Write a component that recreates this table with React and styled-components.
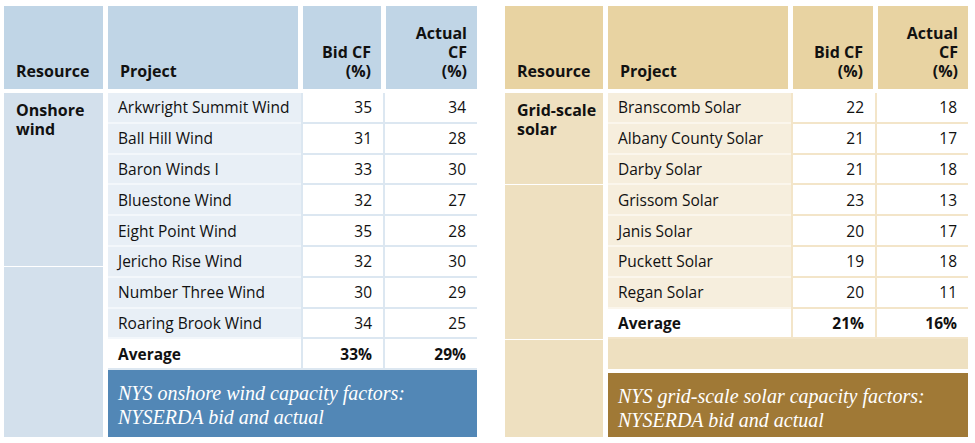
import styled, { createGlobalStyle } from "styled-components";

const GlobalStyle = createGlobalStyle`
  html, body {
    margin: 0;
    padding: 0;
    background: #ffffff;
  }
  body {
    font-family: "Open Sans", "Noto Sans", sans-serif;
    color: #111111;
  }
`;

const blue = {
  head: "#c0d5e6",
  side: "#d3e0ec",
  project: "#e8eff6",
  line: "#dce7f1",
  soft: "#f3f7fb",
  caption: "#5287b6",
  filler: "#d3e0ec",
};

const tan = {
  head: "#e8d3a2",
  side: "#eee0c0",
  project: "#f6eedd",
  line: "#f3e5c9",
  soft: "#fbf6ec",
  caption: "#a07936",
  filler: "#eee0c0",
};

const windData = {
  theme: blue,
  resource: ["Onshore", "wind"],
  segments: [154, 192],
  cols: { side: 99, project: 190, bid: 78, actual: 91 },
  rows: [
    ["Arkwright Summit Wind", 35, 34],
    ["Ball Hill Wind", 31, 28],
    ["Baron Winds I", 33, 30],
    ["Bluestone Wind", 32, 27],
    ["Eight Point Wind", 35, 28],
    ["Jericho Rise Wind", 32, 30],
    ["Number Three Wind", 30, 29],
    ["Roaring Brook Wind", 34, 25],
  ],
  average: ["33%", "29%"],
  filler: false,
  caption: ["NYS onshore wind capacity factors:", "NYSERDA bid and actual"],
};

const solarData = {
  theme: tan,
  resource: ["Grid-scale", "solar"],
  segments: [91, 154, 99],
  cols: { side: 98, project: 180, bid: 80, actual: 90 },
  rows: [
    ["Branscomb Solar", 22, 18],
    ["Albany County Solar", 21, 17],
    ["Darby Solar", 21, 18],
    ["Grissom Solar", 23, 13],
    ["Janis Solar", 20, 17],
    ["Puckett Solar", 19, 18],
    ["Regan Solar", 20, 11],
  ],
  average: ["21%", "16%"],
  filler: true,
  caption: ["NYS grid-scale solar capacity factors:", "NYSERDA bid and actual"],
};

export default function App() {
  return (
    <>
      <GlobalStyle />
      <Page>
        <CapacityTable data={windData} />
        <CapacityTable data={solarData} />
      </Page>
    </>
  );
}

function CapacityTable({ data }) {
  const t = data.theme;
  const { side, project, bid, actual } = data.cols;
  const mainWidth = project + bid + actual + 10;
  return (
    <Table>
      <SideColumn $w={side}>
        <HeadCell $bg={t.head}>Resource</HeadCell>
        <SideBody>
          {data.segments.map((h, i) => (
            <SideSegment key={i} $bg={t.side} $h={h}>
              {i === 0 && (
                <>
                  {data.resource[0]}
                  <br />
                  {data.resource[1]}
                </>
              )}
            </SideSegment>
          ))}
        </SideBody>
      </SideColumn>
      <MainColumn $w={mainWidth}>
        <HeadRow $cols={`${project}px ${bid}px ${actual}px`}>
          <HeadCell $bg={t.head}>Project</HeadCell>
          <HeadCell $bg={t.head} $right>
            Bid CF
            <br />
            (%)
          </HeadCell>
          <HeadCell $bg={t.head} $right>
            Actual
            <br />
            CF
            <br />
            (%)
          </HeadCell>
        </HeadRow>
        <Body>
          {data.rows.map(([name, b, a]) => (
            <Row key={name} $cols={`${project + 3}px ${bid + 4}px 1fr`}>
              <ProjectCell $bg={t.project} $line={t.soft}>
                {name}
              </ProjectCell>
              <NumCell $line={t.line}>{b}</NumCell>
              <NumCell $line={t.line}>{a}</NumCell>
            </Row>
          ))}
          <Row $cols={`${project + 3}px ${bid + 4}px 1fr`} $bold>
            <ProjectCell $bg="#ffffff" $line={t.line}>
              Average
            </ProjectCell>
            <NumCell $line={t.line}>{data.average[0]}</NumCell>
            <NumCell $line={t.line}>{data.average[1]}</NumCell>
          </Row>
          {data.filler && <Filler $bg={t.filler} />}
        </Body>
        <Caption $bg={t.caption} $gap={data.filler ? 4 : 0}>
          {data.caption[0]}
          <br />
          {data.caption[1]}
        </Caption>
      </MainColumn>
    </Table>
  );
}

const Page = styled.div`
  display: flex;
  align-items: flex-start;
  gap: 28px;
  padding: 6px 0 0 4px;
  height: 437px;
  box-sizing: border-box;
`;

const Table = styled.div`
  display: flex;
  gap: 5px;
  height: 433px;
`;

const SideColumn = styled.div`
  display: flex;
  flex-direction: column;
  gap: 4px;
  width: ${(p) => p.$w}px;
`;

const MainColumn = styled.div`
  display: flex;
  flex-direction: column;
  width: ${(p) => p.$w}px;
`;

const HeadRow = styled.div`
  display: grid;
  grid-template-columns: ${(p) => p.$cols};
  column-gap: 5px;
  margin-bottom: 4px;
`;

const HeadCell = styled.div`
  height: 83px;
  box-sizing: border-box;
  background: ${(p) => p.$bg};
  display: flex;
  align-items: flex-end;
  justify-content: ${(p) => (p.$right ? "flex-end" : "flex-start")};
  text-align: ${(p) => (p.$right ? "right" : "left")};
  padding: 0 10px 8px ${(p) => (p.$right ? "0" : "12px")};
  font-weight: 700;
  font-size: 16px;
  line-height: 19px;
  & + & {
    padding-left: 10px;
  }
`;

const SideBody = styled.div`
  flex: 1;
  display: flex;
  flex-direction: column;
  gap: 1px;
`;

const SideSegment = styled.div`
  height: ${(p) => p.$h}px;
  flex: ${(p) => (p.$h > 150 ? 1 : "none")};
  background: ${(p) => p.$bg};
  padding: 8px 0 0 12px;
  box-sizing: border-box;
  font-weight: 700;
  font-size: 16px;
  line-height: 19px;
`;

const Body = styled.div`
  display: flex;
  flex-direction: column;
`;

const Row = styled.div`
  display: grid;
  grid-template-columns: ${(p) => p.$cols};
  height: 30.8px;
  font-size: 15.5px;
  font-weight: ${(p) => (p.$bold ? 700 : 400)};
`;

const ProjectCell = styled.div`
  background: ${(p) => p.$bg};
  border-bottom: 2px solid ${(p) => p.$line};
  display: flex;
  align-items: center;
  padding-left: 10px;
  white-space: nowrap;
`;

const NumCell = styled.div`
  background: #ffffff;
  border-left: 2px solid ${(p) => p.$line};
  border-bottom: 2px solid ${(p) => p.$line};
  display: flex;
  align-items: center;
  justify-content: flex-end;
  padding-right: 11px;
`;

const Filler = styled.div`
  height: 30px;
  background: ${(p) => p.$bg};
`;

const Caption = styled.div`
  flex: 1;
  margin-top: ${(p) => p.$gap}px;
  background: ${(p) => p.$bg};
  color: #ffffff;
  font-family: "Liberation Serif", "DejaVu Serif", serif;
  font-style: italic;
  font-size: 20px;
  line-height: 24px;
  padding: 11px 0 0 10px;
  box-sizing: border-box;
`;
